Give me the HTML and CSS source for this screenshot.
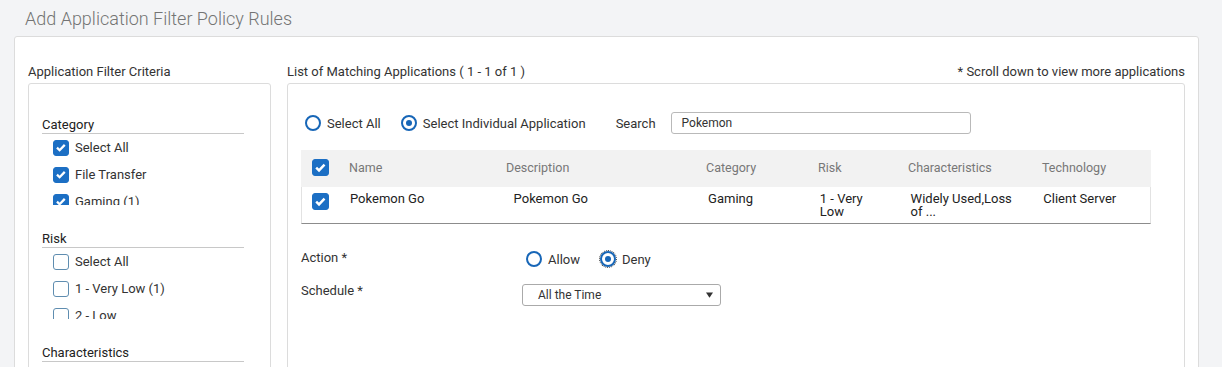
FILE: index.html
```html
<!DOCTYPE html>
<html lang="en">
<head>
    <meta charset="UTF-8">
    <title>Add Application Filter Policy Rules</title>
    <link rel="stylesheet" href="styles.css">
</head>
<body>
    <h1 class="page-title">Add Application Filter Policy Rules</h1>

    <div class="card">
        <div class="filter-col">
            <div class="section-label">Application Filter Criteria</div>
            <div class="filter-box">
                <div class="filter-group">
                    <div class="group-title">Category</div>
                    <div class="group-list">
                        <label class="check-item"><span class="checkbox checked"><svg viewBox="0 0 16 16"><path d="M3.4 8.2l3 2.9 5.9-6.1"/></svg></span>Select All</label>
                        <label class="check-item"><span class="checkbox checked"><svg viewBox="0 0 16 16"><path d="M3.4 8.2l3 2.9 5.9-6.1"/></svg></span>File Transfer</label>
                        <label class="check-item"><span class="checkbox checked"><svg viewBox="0 0 16 16"><path d="M3.4 8.2l3 2.9 5.9-6.1"/></svg></span>Gaming (1)</label>
                    </div>
                </div>
                <div class="filter-group">
                    <div class="group-title">Risk</div>
                    <div class="group-list">
                        <label class="check-item"><span class="checkbox"></span>Select All</label>
                        <label class="check-item"><span class="checkbox"></span>1 - Very Low (1)</label>
                        <label class="check-item"><span class="checkbox"></span>2 - Low</label>
                    </div>
                </div>
                <div class="filter-group">
                    <div class="group-title">Characteristics</div>
                </div>
            </div>
        </div>

        <div class="apps-col">
            <div class="section-label apps-head">
                <span>List of Matching Applications ( 1 - 1 of 1 )</span>
                <span>* Scroll down to view more applications</span>
            </div>
            <div class="apps-box">
                <div class="select-row">
                    <label class="radio-item"><span class="radio"></span>Select All</label>
                    <label class="radio-item"><span class="radio on"></span>Select Individual Application</label>
                    <span class="search-label">Search</span>
                    <div class="search-input">Pokemon</div>
                </div>

                <div class="app-table">
                    <div class="table-head">
                        <div class="cell cell-check"><span class="checkbox checked big"><svg viewBox="0 0 16 16"><path d="M3.4 8.2l3 2.9 5.9-6.1"/></svg></span></div>
                        <div class="cell cell-name">Name</div>
                        <div class="cell cell-desc">Description</div>
                        <div class="cell cell-cat">Category</div>
                        <div class="cell cell-risk">Risk</div>
                        <div class="cell cell-char">Characteristics</div>
                        <div class="cell cell-tech">Technology</div>
                    </div>
                    <div class="table-row">
                        <div class="cell cell-check"><span class="checkbox checked big"><svg viewBox="0 0 16 16"><path d="M3.4 8.2l3 2.9 5.9-6.1"/></svg></span></div>
                        <div class="cell cell-name">Pokemon Go</div>
                        <div class="cell cell-desc">Pokemon Go</div>
                        <div class="cell cell-cat">Gaming</div>
                        <div class="cell cell-risk">1 - Very Low</div>
                        <div class="cell cell-char">Widely Used,Loss of ...</div>
                        <div class="cell cell-tech">Client Server</div>
                    </div>
                </div>

                <div class="form-row action-row">
                    <div class="form-label">Action *</div>
                    <div class="radio-group">
                        <label class="radio-item"><span class="radio"></span>Allow</label>
                        <label class="radio-item"><span class="radio on focus"></span>Deny</label>
                    </div>
                </div>
                <div class="form-row">
                    <div class="form-label">Schedule *</div>
                    <div class="select-box">
                        <span>All the Time</span>
                        <svg class="caret" viewBox="0 0 8 6"><path d="M0 0h8L4 6z"/></svg>
                    </div>
                </div>
            </div>
        </div>
    </div>
</body>
</html>
```

FILE: styles.css
```css
body {
    margin: 0;
    background-color: #f3f4f6;
    font-family: 'Roboto', 'Liberation Sans', sans-serif;
    font-size: 13px;
    color: #333;
    height: 367px;
    overflow: hidden;
}

.page-title {
    margin: 0;
    height: 36px;
    padding-left: 25px;
    font-size: 18px;
    font-weight: 300;
    line-height: 38px;
    color: #747474;
}

.card {
    display: flex;
    gap: 16px;
    width: 1157px;
    height: 400px;
    margin-left: 14px;
    padding: 27px 13px 0 13px;
    background-color: #fff;
    border: 1px solid #dcdcdc;
    border-radius: 3px;
}

.section-label {
    line-height: 16px;
    margin-bottom: 3px;
    color: #333;
}

.filter-col {
    width: 243px;
    flex-shrink: 0;
}

.filter-box {
    height: 320px;
    padding: 33px 26px 0 13px;
    border: 1px solid #dcdcdc;
    border-radius: 3px;
}

.filter-group {
    margin-bottom: 26px;
}

.group-title {
    line-height: 16px;
    border-bottom: 1px solid #c8c8c8;
    color: #222;
}

.group-list {
    height: 71px;
    overflow: hidden;
    padding-left: 11px;
}

.check-item {
    display: flex;
    align-items: center;
    gap: 6px;
    height: 27px;
    color: #333;
}

.checkbox {
    display: inline-flex;
    align-items: center;
    justify-content: center;
    box-sizing: border-box;
    width: 16px;
    height: 16px;
    border: 1.5px solid #5f8db0;
    border-radius: 3px;
    background-color: #fff;
    flex-shrink: 0;
}

.checkbox.checked {
    border-color: #1c6fc4;
    background-color: #1c6fc4;
}

.checkbox.big {
    width: 17px;
    height: 17px;
}

.checkbox svg {
    width: 15px;
    height: 15px;
    fill: none;
    stroke: #fff;
    stroke-width: 2.6;
}

.apps-col {
    flex: 1;
    min-width: 0;
}

.apps-head {
    display: flex;
    justify-content: space-between;
}

.apps-box {
    height: 320px;
    padding: 28px 33px 0 13px;
    border: 1px solid #dcdcdc;
    border-radius: 3px;
}

.select-row {
    display: flex;
    align-items: center;
    height: 22px;
    padding-left: 4px;
}

.radio-item {
    display: flex;
    align-items: center;
    gap: 6px;
    margin-right: 20px;
    color: #333;
}

.radio {
    box-sizing: border-box;
    width: 16px;
    height: 16px;
    border: 2px solid #1766b7;
    border-radius: 50%;
    display: inline-flex;
    align-items: center;
    justify-content: center;
}

.radio.on::after {
    content: "";
    width: 6px;
    height: 6px;
    border-radius: 50%;
    background-color: #1766b7;
}

.radio.focus {
    outline: 1px dotted #333;
    outline-offset: 0;
}

.search-label {
    margin-left: 10px;
    margin-right: 15px;
    color: #333;
}

.search-input {
    box-sizing: border-box;
    width: 300px;
    height: 22px;
    padding-left: 10px;
    border: 1px solid #b9b9b9;
    border-radius: 3px;
    font-size: 12px;
    line-height: 20px;
    color: #333;
}

.app-table {
    width: 850px;
    margin-top: 16px;
}

.table-head,
.table-row {
    display: flex;
}

.table-head {
    height: 37px;
    padding-bottom: 2px;
    box-sizing: border-box;
    align-items: center;
    background-color: #f2f2f2;
    color: #777;
    font-size: 12.5px;
}

.table-row {
    box-sizing: border-box;
    height: 37px;
    padding-top: 5px;
    border: 1px solid #e2e2e2;
    border-top: none;
    border-bottom: 1px solid #8c8c8c;
    line-height: 13px;
    color: #222;
}

.cell {
    box-sizing: border-box;
    padding-right: 22px;
}

.cell-check {
    width: 48px;
    padding-left: 11px;
    display: flex;
}

.table-row .cell-check {
    padding-left: 10px;
    padding-top: 1px;
}

.cell-name { width: 157px; }
.cell-desc { width: 200px; }
.cell-cat { width: 112px; }
.cell-risk { width: 90px; }
.cell-char { width: 134px; }
.cell-tech { width: 109px; }

.table-row .cell-desc { padding-left: 7px; }
.table-row .cell-cat,
.table-row .cell-risk,
.table-row .cell-tech { padding-left: 2px; }
.table-row .cell-char { padding-left: 3px; }

.form-row {
    display: flex;
    align-items: flex-start;
    margin-bottom: 15px;
}

.action-row {
    height: 18px;
    margin-top: 26px;
}

.form-label {
    width: 221px;
    line-height: 16px;
    color: #333;
}

.radio-group {
    display: flex;
    align-items: center;
    height: 18px;
    padding-left: 4px;
}

.select-box {
    box-sizing: border-box;
    display: flex;
    align-items: center;
    justify-content: space-between;
    width: 199px;
    height: 22px;
    margin-top: 1px;
    padding: 0 7px 0 15px;
    border: 1px solid #aaa;
    border-radius: 3px;
    font-size: 12px;
    color: #333;
}

.caret {
    width: 7px;
    height: 6px;
    fill: #333;
}
```
